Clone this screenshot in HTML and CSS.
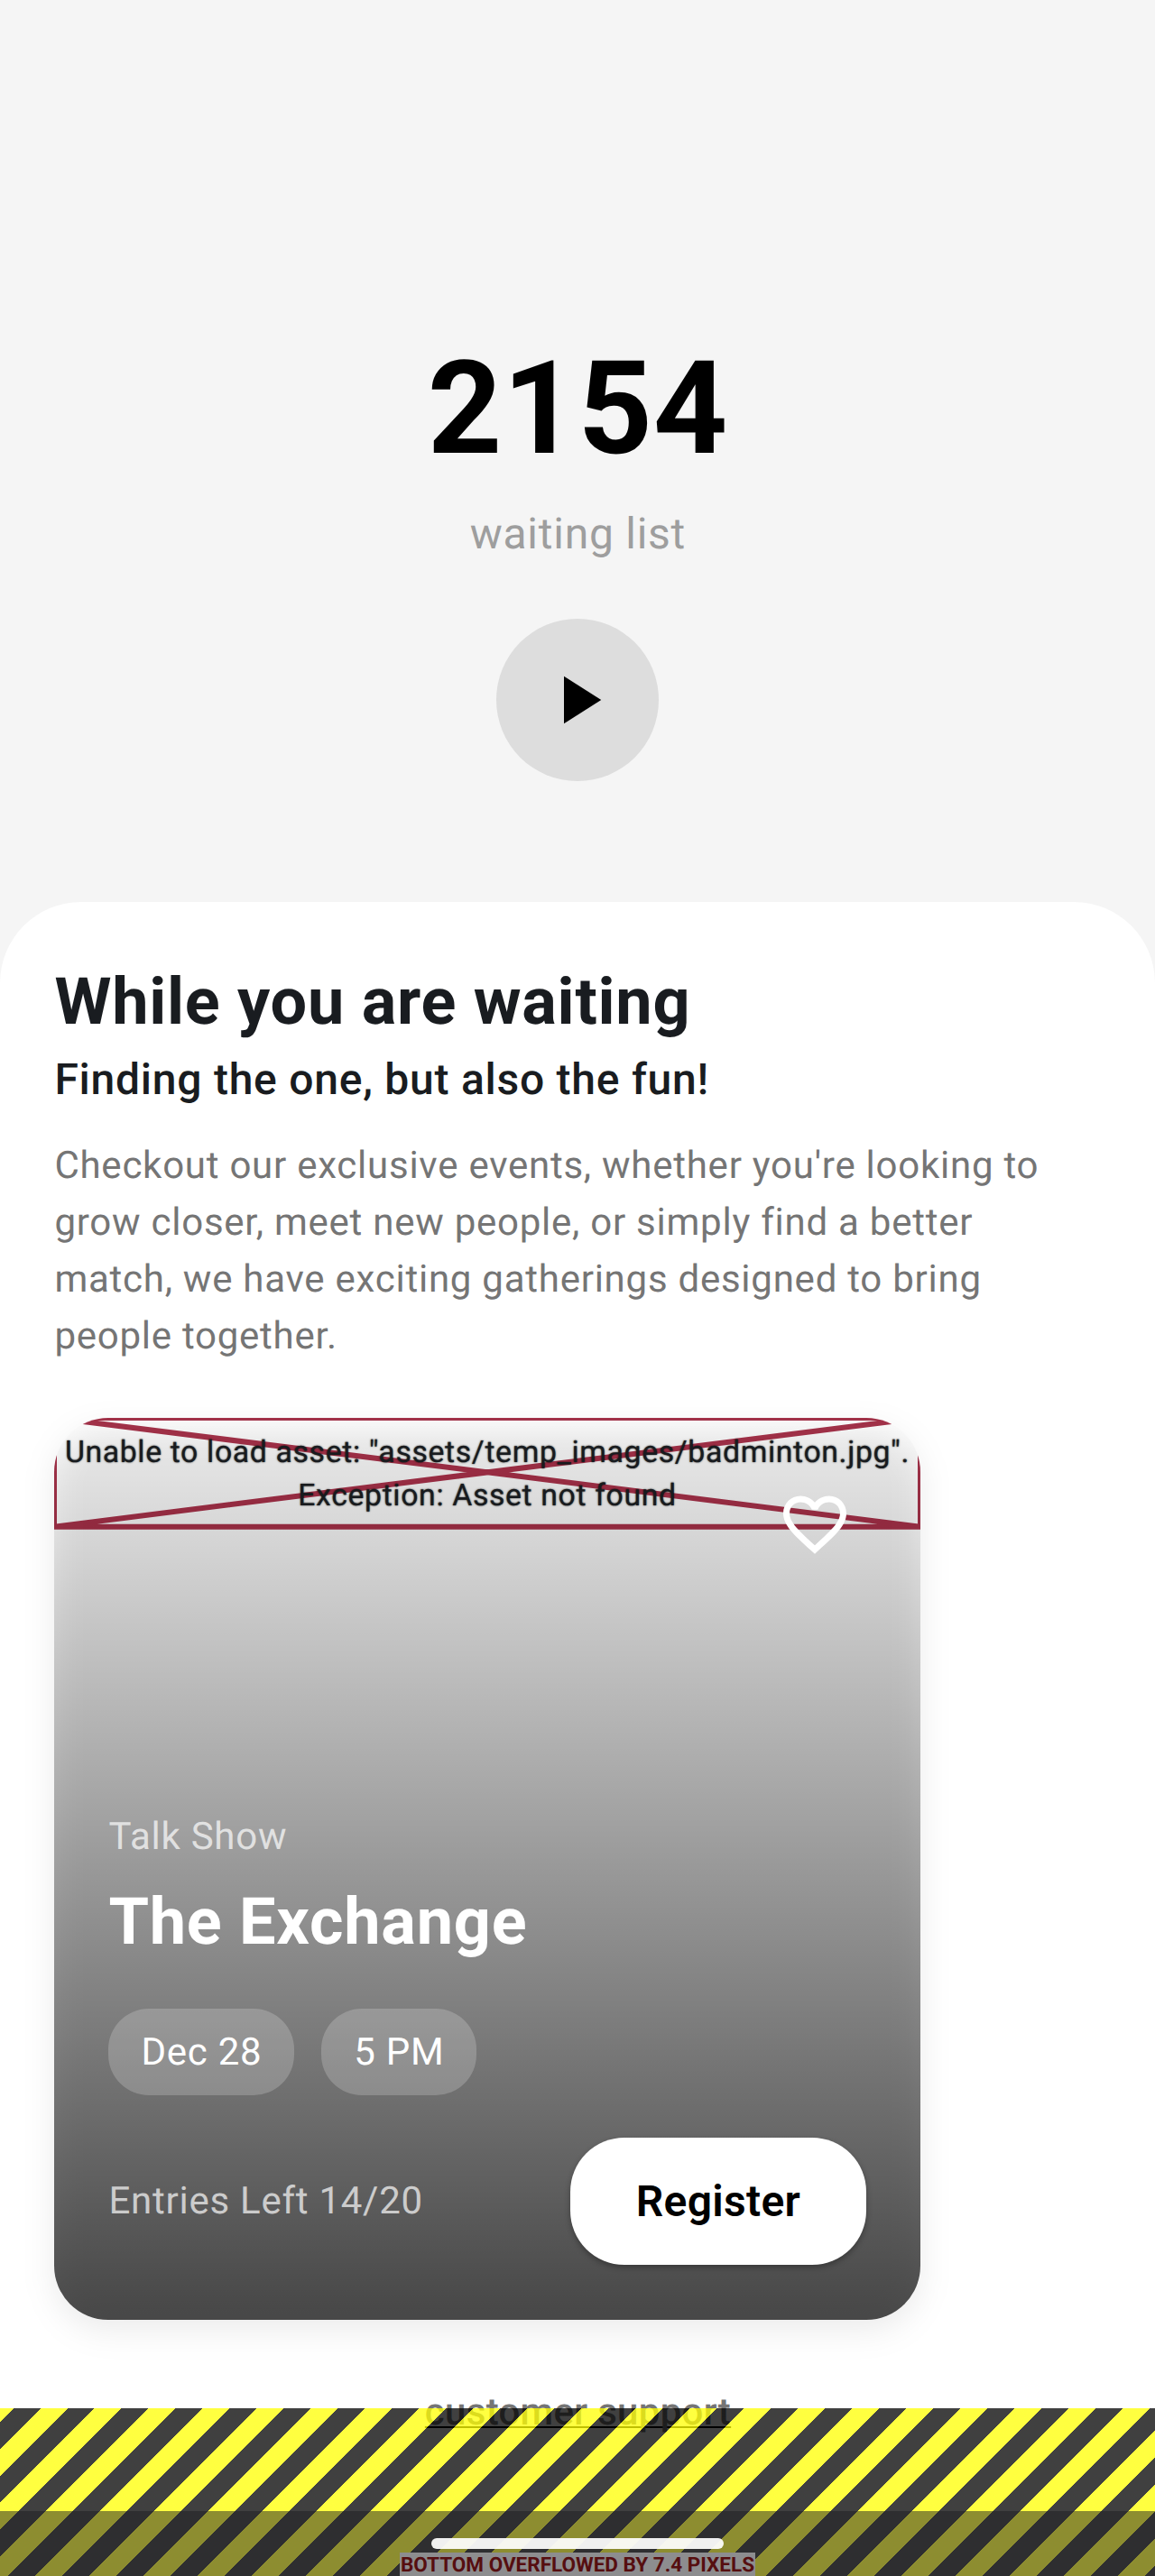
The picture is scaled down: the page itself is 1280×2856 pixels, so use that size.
FILE: index.html
```html
<!DOCTYPE html>
<html lang="en">
<head>
<meta charset="utf-8">
<title>Waiting list</title>
<link rel="stylesheet" href="styles.css">
</head>
<body>
<div class="screen">
  <header class="queue">
    <div class="queue-count">2154</div>
    <div class="queue-label">waiting list</div>
    <button class="play" aria-label="Play">
      <svg class="play-icon" viewBox="0 0 24 24"><path d="M8 5v14l11-7z"/></svg>
    </button>
  </header>

  <main class="panel">
    <h1 class="panel-title">While you are waiting</h1>
    <h2 class="panel-subtitle">Finding the one, but also the fun!</h2>
    <p class="panel-text">Checkout our exclusive events, whether you're looking to grow closer, meet new people, or simply find a better match, we have exciting gatherings designed to bring people together.</p>

    <article class="event">
      <div class="event-body">
        <div class="asset-error">
          <svg class="asset-cross" viewBox="0 0 960 120.7" preserveAspectRatio="none"><path d="M0 0H960V120.7H0ZL960 120.7M960 0L0 120.7"/></svg>
          <p class="asset-text">Unable to load asset: "assets/temp_images/badminton.jpg".<br>Exception: Asset not found</p>
        </div>
        <div class="event-content">
          <svg class="heart" viewBox="0 0 24 24"><path d="M16.5 3c-1.74 0-3.41.81-4.5 2.09C10.91 3.81 9.24 3 7.5 3 4.42 3 2 5.42 2 8.5c0 3.78 3.4 6.86 8.55 11.54L12 21.35l1.45-1.32C18.6 15.36 22 12.28 22 8.5 22 5.42 19.58 3 16.5 3zm-4.4 15.55l-.1.1-.1-.1C7.14 14.24 4 11.39 4 8.5 4 6.5 5.5 5 7.5 5c1.54 0 3.04.99 3.57 2.36h1.87C13.46 5.99 14.96 5 16.5 5c2 0 3.5 1.5 3.5 3.5 0 2.89-3.14 5.74-7.9 10.05z"/></svg>
          <div class="event-kind">Talk Show</div>
          <h3 class="event-name">The Exchange</h3>
          <div class="chips">
            <span class="chip">Dec 28</span>
            <span class="chip">5 PM</span>
          </div>
          <div class="event-footer">
            <span class="entries">Entries Left 14/20</span>
            <button class="register">Register</button>
          </div>
        </div>
      </div>
    </article>

    <a class="support">customer support</a>
  </main>

  <div class="overflow-stripes">
    <span class="overflow-label">BOTTOM OVERFLOWED BY 7.4 PIXELS</span>
  </div>
  <div class="nav-bar"><div class="nav-handle"></div></div>
</div>
</body>
</html>
```
FILE: styles.css
```css
* {
  box-sizing: border-box;
}

body {
  margin: 0;
  font-family: "Roboto", sans-serif;
  letter-spacing: 0.75px;
  text-rendering: geometricPrecision;
  background: #f5f5f5;
}

h1, h2, h3, p {
  margin: 0;
}

button {
  border: 0;
  padding: 0;
  font-family: inherit;
}

.screen {
  position: relative;
  display: flex;
  flex-direction: column;
  width: 1280px;
  height: 2856px;
  overflow: hidden;
}

/* Queue position */

.queue {
  display: flex;
  flex-direction: column;
  align-items: center;
  height: 999.67px;
  padding-top: 369px;
}

.queue-count {
  padding-left: 0.75px;
  font-size: 144px;
  font-weight: 700;
  line-height: 169px;
  color: #000;
}

.queue-label {
  margin-top: 25px;
  padding-left: 0.75px;
  font-size: 48px;
  line-height: 57px;
  color: #9e9e9e;
}

.play {
  display: flex;
  align-items: center;
  justify-content: center;
  width: 180px;
  height: 180px;
  margin-top: 65.67px;
  border-radius: 50%;
  background: #ddd;
}

.play-icon {
  width: 90px;
  height: 90px;
  fill: #000;
}

/* Content sheet */

.panel {
  display: flex;
  flex-direction: column;
  align-items: flex-start;
  flex: 1;
  padding: 68.35px 60px 0;
  border-radius: 90px 90px 0 0;
  background: #fff;
}

.panel-title {
  padding-left: 0.4px;
  font-size: 72px;
  font-weight: 700;
  line-height: 85px;
  color: #191c20;
}

.panel-subtitle {
  margin-top: 15px;
  padding-left: 0.4px;
  font-size: 48px;
  font-weight: 500;
  line-height: 57px;
  color: #191c20;
}

.panel-text {
  margin-top: 35.6px;
  padding-left: 0.4px;
  font-size: 42px;
  line-height: 63px;
  color: #757575;
}

/* Event card */

.event {
  position: relative;
  width: 960px;
  height: 1000px;
  margin-top: 59.75px;
}

.event::before {
  content: "";
  position: absolute;
  inset: 12px 0 -12px;
  border-radius: 60px;
  background: rgba(0, 0, 0, 0.08);
  filter: blur(17.8px);
}

.event-body {
  position: relative;
  height: 100%;
  border-radius: 60px;
  overflow: hidden;
}

.asset-error {
  position: relative;
  height: 120.7px;
}

.asset-cross {
  position: absolute;
  inset: 0;
  width: 960px;
  height: 120.7px;
  overflow: visible;
  fill: none;
  stroke: rgba(141, 2, 31, 0.81);
  stroke-width: 6;
}

.asset-text {
  position: relative;
  padding-top: 14.3px;
  font-size: 33.8px;
  line-height: 48.3px;
  letter-spacing: 0.63px;
  text-align: center;
  white-space: nowrap;
  color: #191c20;
  text-shadow: 0 0 2px rgba(0, 0, 0, 0.8);
}

.event-content {
  position: absolute;
  inset: 0;
  display: flex;
  flex-direction: column;
  padding: 439.8px 60px 0;
  background: linear-gradient(rgba(0, 0, 0, 0), rgba(0, 0, 0, 0.7));
}

.heart {
  position: absolute;
  top: 76px;
  right: 75px;
  width: 84px;
  height: 84px;
  fill: #fff;
}

.event-kind {
  padding-left: 0.4px;
  font-size: 42px;
  line-height: 49px;
  color: rgba(255, 255, 255, 0.7);
}

.event-name {
  margin-top: 27px;
  padding-left: 0.4px;
  font-size: 72px;
  font-weight: 700;
  line-height: 85px;
  color: #fff;
}

.chips {
  display: flex;
  gap: 30px;
  margin-top: 54.3px;
}

.chip {
  height: 96px;
  padding: 0 35.6px 0 36.4px;
  border-radius: 45px;
  background: rgba(255, 255, 255, 0.2);
  font-size: 42px;
  line-height: 98px;
  color: #fff;
}

.event-footer {
  display: flex;
  align-items: center;
  justify-content: space-between;
  margin-top: 46.3px;
}

.entries {
  padding: 2px 0 0 0.4px;
  font-size: 42px;
  line-height: 60px;
  color: rgba(255, 255, 255, 0.7);
}

.register {
  width: 328px;
  height: 141.3px;
  padding-top: 1px;
  border-radius: 60px;
  background: #fff;
  box-shadow: 0 3px 6px rgba(0, 0, 0, 0.3);
  font-size: 48px;
  font-weight: 600;
  letter-spacing: 0.3px;
  color: #000;
}

.support {
  align-self: center;
  margin-top: 73px;
  padding-left: 1px;
  font-size: 42px;
  font-weight: 500;
  line-height: 60px;
  letter-spacing: 0.3px;
  color: #757575;
  text-decoration: underline #000 2px;
  text-underline-offset: 2px;
  text-decoration-skip-ink: none;
}

/* Overflow marker and system navigation, both drawn over the page */

.overflow-stripes {
  position: absolute;
  inset: auto 0 0;
  display: flex;
  align-items: flex-end;
  justify-content: center;
  height: 186px;
  background: repeating-linear-gradient(135deg,
    rgba(255, 255, 0, 0.75) 0 10.607px,
    rgba(0, 0, 0, 0.75) 10.607px 31.82px,
    rgba(255, 255, 0, 0.75) 31.82px 42.426px);
}

.overflow-label {
  height: 25.6px;
  padding: 0 0.5px;
  background: #fff;
  font-size: 22.5px;
  font-weight: 700;
  line-height: 28px;
  letter-spacing: 0;
  color: #900000;
}

.nav-bar {
  position: absolute;
  inset: auto 0 0;
  display: flex;
  align-items: flex-end;
  justify-content: center;
  height: 72px;
  padding-bottom: 30px;
  background: rgba(27, 27, 31, 0.5);
}

.nav-handle {
  width: 324px;
  height: 12px;
  border-radius: 6px;
  background: rgba(255, 255, 255, 0.93);
}
```
